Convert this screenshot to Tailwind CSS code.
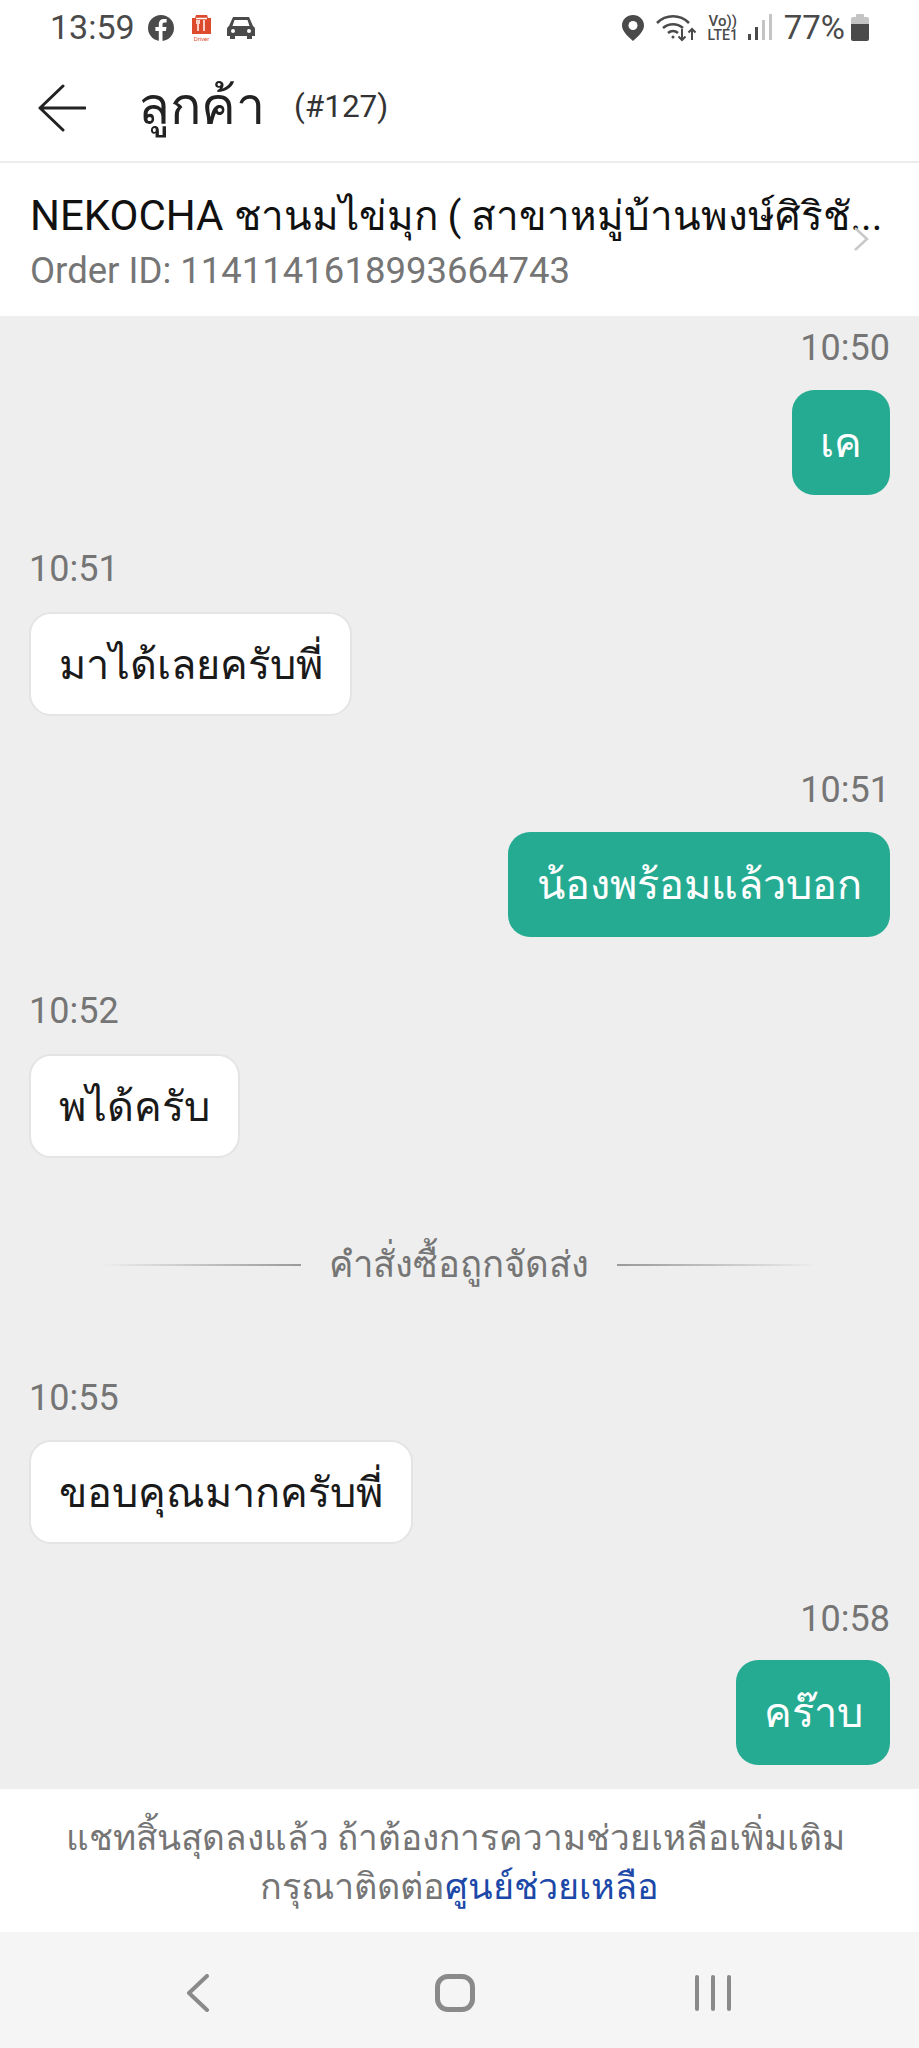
<!DOCTYPE html>
<html lang="th">
<head>
    <meta charset="UTF-8">
    <title>ลูกค้า</title>
    <script src="https://cdn.jsdelivr.net/npm/@tailwindcss/browser@4"></script>
</head>
<body class="bg-white font-['Roboto','Noto_Sans',sans-serif]">
<div class="flex flex-col w-[919px] h-[2048px] overflow-hidden">

    <!-- Status bar -->
    <div class="h-[55px] shrink-0 flex items-center justify-between pl-[50px] pr-[50px] text-[#4a4a4a]">
        <div class="flex items-center">
            <span class="text-[34px] leading-none mt-[-2px]">13:59</span>
            <svg class="w-[26px] h-[26px] ml-[13px]" viewBox="0 0 26 26"><circle cx="13" cy="13" r="13" fill="#4a4a4a"/><path d="M14.5 26v-10h3.4l.6-4h-4v-2.4c0-1.2.5-2 2.1-2h2v-3.500c-.6-.1-1.700-.2-2.800-.2-3 0-5 1.800-5 5.100v3h-3.400v4h3.400v10z" fill="#fff"/></svg>
            <svg class="w-[19px] h-[26px] ml-[18px]" viewBox="0 0 19 26"><path d="M4 0h11l1 3h3v16h-19v-16h3z" fill="#dd4a2c"/><path d="M5 5v4M7 5v4M6 9v7M12 5v11M4 3.500h11" stroke="#fff" stroke-width="1.500" fill="none"/><text x="9.500" y="25.500" text-anchor="middle" font-size="6" fill="#dd4a2c">Driver</text></svg>
            <svg class="w-[28px] h-[24px] ml-[16px]" viewBox="0 0 28 24"><path d="M6 1h16l4 9q2 1 2 3v7h-3v3h-5v-3h-12v3h-5v-3h-3v-7q0-2 2-3zM7.500 4l-2 6h17l-2-6z" fill="#4a4a4a" fill-rule="evenodd"/><circle cx="6" cy="15" r="2" fill="#fff"/><circle cx="22" cy="15" r="2" fill="#fff"/></svg>
        </div>
        <div class="flex items-center">
            <svg class="w-[22px] h-[26px]" viewBox="0 0 22 26"><path d="M11 0c6 0 11 4.500 11 10.500 0 6-6 11-11 15.500-5-4.500-11-9.500-11-15.500 0-6 5-10.500 11-10.500z" fill="#4a4a4a"/><circle cx="11" cy="10.500" r="4.500" fill="#fff"/></svg>
            <svg class="w-[40px] h-[28px] ml-[12px]" viewBox="0 0 40 28" fill="none" stroke="#4a4a4a" stroke-width="2.600"><path d="M1 9c9-9 23-9 32 0M7 14c6-5 14-5 20 0M12 19c3-2.500 7-2.500 10 0"/><circle cx="17" cy="23" r="1.500" fill="#4a4a4a" stroke="none"/><path d="M26 15v11M22.500 22.500l3.500 3.500 3.500-3.500M36 26v-11M32.500 18.500l3.500-3.500 3.500 3.500" stroke-width="2"/></svg>
            <div class="w-[34px] ml-[10px] flex flex-col items-center text-[15px] leading-[14px] font-medium">
                <span>Vo))</span>
                <span class="text-[14px]">LTE1</span>
            </div>
            <div class="flex items-end gap-[4px] h-[26px] ml-[8px] mt-[-2px]">
                <div class="w-[3px] h-[6px] bg-[#4a4a4a]"></div>
                <div class="w-[3px] h-[13px] bg-[#4a4a4a]"></div>
                <div class="w-[3px] h-[20px] bg-[#c4c4c4]"></div>
                <div class="w-[3px] h-[26px] bg-[#c4c4c4]"></div>
            </div>
            <span class="text-[33px] leading-none ml-[12px]">77%</span>
            <div class="ml-[6px] w-[18px] h-[27px] flex flex-col items-center">
                <div class="w-[8px] h-[3px] bg-[#c4c4c4] rounded-t-[1px]"></div>
                <div class="w-[18px] h-[24px] rounded-[2px] bg-linear-to-b from-[#c4c4c4] from-30% to-[#4a4a4a] to-30%"></div>
            </div>
        </div>
    </div>

    <!-- Header -->
    <header class="h-[108px] shrink-0 flex items-center border-b-2 border-[#ececec] pl-[38px]">
        <svg class="w-[48px] h-[48px]" viewBox="0 0 48 48" fill="none" stroke="#222" stroke-width="3" stroke-linecap="round" stroke-linejoin="round"><path d="M47 24h-45M25 2l-23 22 23 22"/></svg>
        <h1 class="ml-[52px] mb-[3px] text-[52px] leading-none text-[#222]">ลูกค้า</h1>
        <span class="ml-[29px] mb-[2px] text-[31.500px] leading-none text-[#333]">(#127)</span>
    </header>

    <!-- Order -->
    <div class="relative h-[153px] shrink-0 pl-[30px] pr-[30px] pt-[24px]">
        <div class="text-[40.400px] leading-[58px] text-[#111] whitespace-nowrap"><span class="text-[42px]">NEKOCHA</span> ชานมไข่มุก ( สาขาหมู่บ้านพงษ์ศิริชั...</div>
        <div class="text-[36.500px] leading-[50px] text-[#757575] whitespace-nowrap">Order ID: 1141141618993664743</div>
        <svg class="absolute right-[50px] top-[64px] w-[16px] h-[24px]" viewBox="0 0 16 24" fill="none" stroke="#c8c8c8" stroke-width="2.500"><path d="M2 1l12 11-12 11"/></svg>
    </div>

    <!-- Chat -->
    <main class="flex-1 bg-[#eeeeee] px-[29px] pt-[9px] flex flex-col text-[41.500px]">
        <div class="flex flex-col items-end">
            <div class="h-[44px] leading-[47px] text-[36px] text-[#757575]">10:50</div>
            <div class="mt-[21px] h-[105px] w-[98px] pt-[2px] rounded-[22px] bg-[#26ab93] text-white flex items-center justify-center">เค</div>
        </div>
        <div class="flex flex-col items-start mt-[51px]">
            <div class="h-[44px] leading-[47px] text-[36px] text-[#757575]">10:51</div>
            <div class="mt-[22px] h-[104px] w-[323px] pt-[2px] rounded-[22px] bg-white border-2 border-[#e4e4e4] text-[#1a1a1a] flex items-center justify-center whitespace-nowrap">มาได้เลยครับพี่</div>
        </div>
        <div class="flex flex-col items-end mt-[51px]">
            <div class="h-[44px] leading-[47px] text-[36px] text-[#757575]">10:51</div>
            <div class="mt-[21px] h-[105px] w-[382px] pt-[2px] rounded-[22px] bg-[#26ab93] text-white flex items-center justify-center whitespace-nowrap">น้องพร้อมแล้วบอก</div>
        </div>
        <div class="flex flex-col items-start mt-[51px]">
            <div class="h-[44px] leading-[47px] text-[36px] text-[#757575]">10:52</div>
            <div class="mt-[22px] h-[104px] w-[211px] pt-[2px] rounded-[22px] bg-white border-2 border-[#e4e4e4] text-[#1a1a1a] flex items-center justify-center whitespace-nowrap">พได้ครับ</div>
        </div>

        <div class="mt-[85px] h-[44px] flex items-center px-[72px]">
            <div class="w-[200px] h-[2px] bg-linear-to-r from-transparent to-[#999999]"></div>
            <span class="flex-1 text-center text-[36.500px] leading-[44px] text-[#757575] whitespace-nowrap">คำสั่งซื้อถูกจัดส่ง</span>
            <div class="w-[201px] h-[2px] bg-linear-to-l from-transparent to-[#999999]"></div>
        </div>

        <div class="flex flex-col items-start mt-[88px]">
            <div class="h-[44px] leading-[47px] text-[36px] text-[#757575]">10:55</div>
            <div class="mt-[21px] h-[104px] w-[384px] pt-[2px] rounded-[22px] bg-white border-2 border-[#e4e4e4] text-[#1a1a1a] flex items-center justify-center whitespace-nowrap">ขอบคุณมากครับพี่</div>
        </div>
        <div class="flex flex-col items-end mt-[52px]">
            <div class="h-[44px] leading-[47px] text-[36px] text-[#757575]">10:58</div>
            <div class="mt-[20px] h-[105px] w-[154px] pt-[2px] rounded-[22px] bg-[#26ab93] text-white flex items-center justify-center whitespace-nowrap">คร๊าบ</div>
        </div>
    </main>

    <!-- Chat ended notice -->
    <div class="h-[143px] shrink-0 bg-white flex flex-col items-center justify-center pt-[4px] text-[35.200px] leading-[49px] text-[#757575]">
        <p class="whitespace-nowrap mr-[8px]">แชทสิ้นสุดลงแล้ว ถ้าต้องการความช่วยเหลือเพิ่มเติม</p>
        <p class="whitespace-nowrap text-[36px]">กรุณาติดต่อ<span class="text-[#1c48a8]">ศูนย์ช่วยเหลือ</span></p>
    </div>

    <!-- Android nav -->
    <nav class="h-[116px] shrink-0 bg-[#f5f5f5] relative flex items-center justify-center pt-[5px]">
        <svg class="absolute left-[186px] w-[24px] h-[38px]" viewBox="0 0 24 38" fill="none" stroke="#8a8a8a" stroke-width="4" stroke-linecap="round" stroke-linejoin="round"><path d="M21 2l-18 17 18 17"/></svg>
        <div class="absolute left-[435px] w-[40px] h-[38px] rounded-[13px] border-[5px] border-[#8a8a8a]"></div>
        <div class="absolute left-[695px] flex gap-[12px]">
            <div class="w-[4px] h-[36px] bg-[#8a8a8a] rounded-full"></div>
            <div class="w-[4px] h-[36px] bg-[#8a8a8a] rounded-full"></div>
            <div class="w-[4px] h-[36px] bg-[#8a8a8a] rounded-full"></div>
        </div>
    </nav>
</div>
</body>
</html>
